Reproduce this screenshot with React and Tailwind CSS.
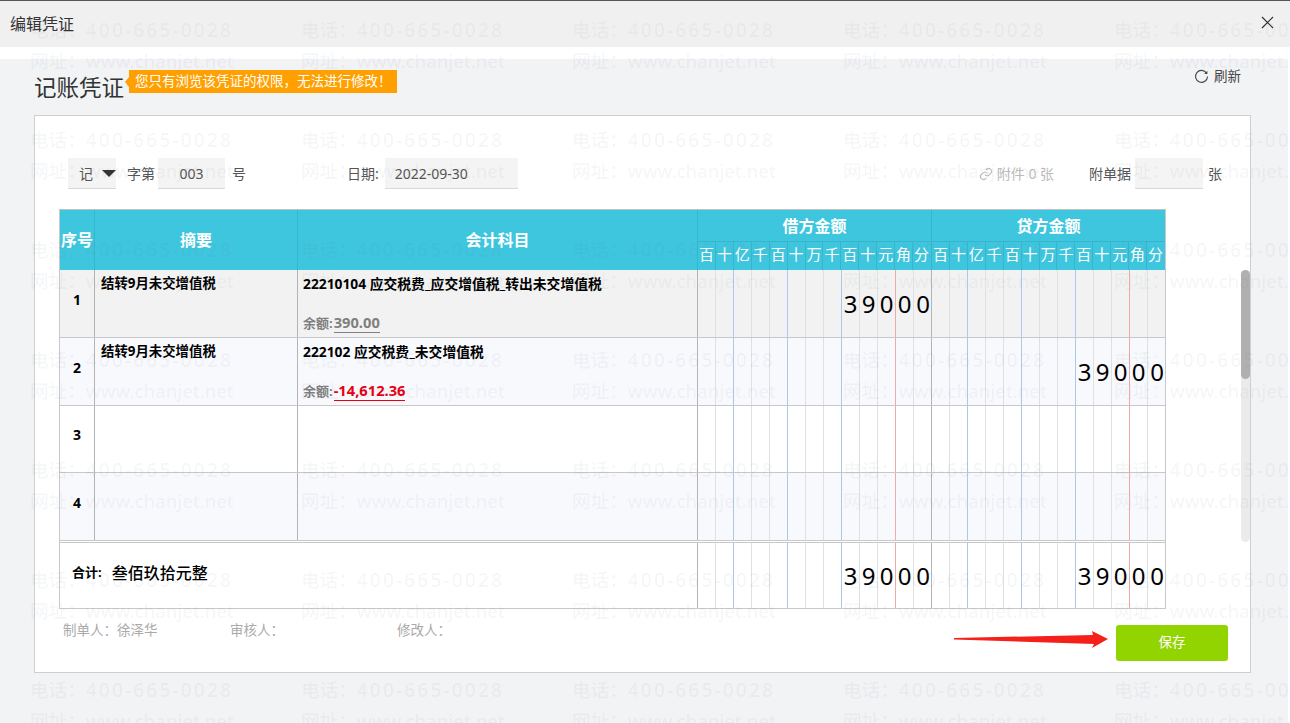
import React from "react";

const units = ["百","十","亿","千","百","十","万","千","百","十","元","角","分"];
const FONT = "font-['Noto_Sans','Noto_Sans_CJK_SC',sans-serif]";

function lineClass(i) {
  if (i === 12) return "";
  if (i === 10) return "border-r border-r-[#eeaaaa]";
  if (i === 1 || i === 4 || i === 7) return "border-r border-r-[#a9c8ea]";
  return "border-r border-r-[#e0e0e0]";
}

function HeaderUnits() {
  return (
    <div className="flex h-[28px]">
      {units.map((u, i) => (
        <div key={i} className={"w-[18px] h-full flex items-center justify-center pb-[3px] text-[15px] text-white border-r " + (i === 12 ? "border-r-transparent" : "border-r-[#38b5cc]")}>
          {u}
        </div>
      ))}
    </div>
  );
}

function Amount({ digits = "", last }) {
  const cells = Array(13).fill("");
  if (digits) {
    const arr = digits.split("");
    arr.forEach((d, i) => { cells[13 - arr.length + i] = d; });
  }
  return (
    <div className={"flex w-[234px] h-full shrink-0 " + (last ? "" : "border-r border-r-[#b4b4b4]")}>
      {cells.map((c, i) => (
        <div key={i} className={"w-[18px] shrink-0 h-full flex items-center justify-center text-[24px] text-black " + lineClass(i)}>
          {c}
        </div>
      ))}
    </div>
  );
}

function Row({ no, bg, h = "h-[68px]", summary, code, balance, red, debit, credit }) {
  return (
    <div className={"flex border-b border-b-[#c8c8c8] " + h + " " + bg}>
      <div className="w-[35px] shrink-0 border-r border-r-[#b4b4b4] flex items-center justify-center pb-[9px] text-[14px] font-bold text-black">{no}</div>
      <div className="w-[203px] shrink-0 border-r border-r-[#b4b4b4] pl-[6px] pt-[3px] text-[13.4px] leading-[20px] font-bold text-black">{summary}</div>
      <div className="w-[400px] shrink-0 border-r border-r-[#b4b4b4] pl-[5px] pt-[3px] flex flex-col">
        {code && <div className="text-[13.8px] leading-[21px] font-bold text-black">{code}</div>}
        {code && (
          <div className="mt-[18px] text-[13px] leading-[20px] text-[#7f7f7f] font-bold">
            余额:<span className={"inline-block ml-[1px] text-[14.7px] leading-[20px] border-b " + (red ? "text-[#e60012] border-b-[#e60012]" : "text-[#7f7f7f] border-b-[#7f7f7f]")}>{balance}</span>
          </div>
        )}
      </div>
      <Amount digits={debit} />
      <Amount digits={credit} last />
    </div>
  );
}

function Field({ w, children }) {
  return (
    <div className={"h-[31px] bg-[#f4f4f4] border-b border-b-[#d8d8d8] flex items-center text-[14px] text-[#555] " + w}>
      {children}
    </div>
  );
}

function Watermark() {
  const ys = [15, 125, 235, 345, 455, 565, 675];
  const xs = [30, 301, 572, 843, 1114];
  return (
    <div className="absolute inset-0 pointer-events-none overflow-hidden">
      {ys.map((y) =>
        xs.map((x) => (
          <div key={x + "-" + y} className="absolute whitespace-nowrap text-[#6b7280]/[0.07] font-medium leading-[30px]" style={{ left: x, top: y }}>
            <div><span className="text-[18.6px]">电话：</span><span className="text-[19px] tracking-[2.2px]">400-665-0028</span></div>
            <div><span className="text-[18.6px]">网址：</span><span className="text-[18.4px]">www.chanjet.net</span></div>
          </div>
        ))
      )}
    </div>
  );
}

export default function App() {
  return (
    <div className={"relative w-[1290px] h-[723px] overflow-hidden bg-white flex flex-col " + FONT}>
      {/* title bar */}
      <div className="h-[47px] shrink-0 border-t border-t-[#555] bg-[#f0f0f0] flex items-center justify-between pl-[10px] pr-[16px]">
        <span className="text-[16px] text-[#333]">编辑凭证</span>
        <svg width="13" height="13" viewBox="0 0 13 13" className="mb-[3px]">
          <path d="M1 1L12 12M12 1L1 12" stroke="#333" strokeWidth="1.2" fill="none" />
        </svg>
      </div>
      <div className="h-[12px] shrink-0 bg-white" />

      {/* body */}
      <div className="flex-1 mr-[2px] bg-[#f2f3f5] pl-[34px] pr-[37px] flex flex-col">
        <div className="h-[56px] shrink-0 flex items-start">
          <span className="mt-[13px] text-[22.5px] leading-[32px] text-[#333]">记账凭证</span>
          <div className="relative ml-[5px] mt-[11px] h-[23px] w-[268px] bg-[#ffa000] text-white text-[13.5px] leading-[22px] pl-[6px]">
            <span className="absolute -left-[4px] top-[7px] w-0 h-0 border-y-[5px] border-y-transparent border-r-[4px] border-r-[#ffa000]" />
            您只有浏览该凭证的权限，无法进行修改！
          </div>
          <div className="ml-auto mt-[8px] mr-[10px] flex items-center gap-[5px] text-[13.5px] leading-[18px] text-[#444]">
            <svg width="15" height="15" viewBox="0 0 15 15" fill="none">
              <path d="M12.6 4.2A6 6 0 1 0 13.5 7.5" stroke="#444" strokeWidth="1.1" />
              <path d="M13.4 1.8V5H10.2" fill="#444" />
            </svg>
            刷新
          </div>
        </div>

        {/* card */}
        <div className="relative w-[1217px] h-[558px] bg-white border border-[#cfcfcf] pl-[24px] flex flex-col">
          {/* toolbar */}
          <div className="mt-[42px] h-[31px] shrink-0 flex items-center text-[14px] text-[#555] w-[1170px] pl-[9px]">
            <Field w="w-[48px] pl-[11px] gap-[9px]">
              记
              <span className="w-0 h-0 border-x-[7px] border-x-transparent border-t-[7px] border-t-[#333]" />
            </Field>
            <span className="ml-[11px] mr-[3px]">字第</span>
            <Field w="w-[67px] justify-center">003</Field>
            <span className="ml-[7px]">号</span>
            <span className="ml-[101px] mr-[6px]">日期:</span>
            <Field w="w-[133px] pl-[10px]">2022-09-30</Field>
            <span className="ml-[461px] flex items-center gap-[4px] text-[#bdbdbd]">
              <svg width="14" height="14" viewBox="0 0 24 24" fill="none" stroke="#bdbdbd" strokeWidth="2">
                <path d="M10 13a5 5 0 0 0 7.5.5l3-3a5 5 0 0 0-7-7l-1.700 1.700" />
                <path d="M14 11a5 5 0 0 0-7.500-.5l-3 3a5 5 0 0 0 7 7l1.700-1.700" />
              </svg>
              附件 0 张
            </span>
            <span className="ml-[35px] mr-[4px]">附单据</span>
            <Field w="w-[68px]" />
            <span className="ml-[5px]">张</span>
          </div>

          {/* table */}
          <div className="mt-[20px] w-[1107px] h-[400px] border border-[#c8c8c8] border-t-[#c0c0c0] flex flex-col">
            <div className="flex h-[60px] shrink-0 bg-[#3dc6de] text-white font-bold">
              <div className="w-[35px] shrink-0 border-r border-r-[#38b5cc] flex items-center justify-center text-[16px]">序号</div>
              <div className="w-[203px] shrink-0 border-r border-r-[#38b5cc] flex items-center justify-center text-[16px]">摘要</div>
              <div className="w-[400px] shrink-0 border-r border-r-[#38b5cc] flex items-center justify-center text-[16px]">会计科目</div>
              <div className="w-[234px] shrink-0 border-r border-r-[#38b5cc] flex flex-col">
                <div className="h-[32px] pt-[1px] border-b border-b-[#38b5cc] flex items-center justify-center text-[16px]">借方金额</div>
                <div className="font-normal"><HeaderUnits /></div>
              </div>
              <div className="w-[233px] shrink-0 flex flex-col">
                <div className="h-[32px] pt-[1px] border-b border-b-[#38b5cc] flex items-center justify-center text-[16px]">贷方金额</div>
                <div className="font-normal"><HeaderUnits /></div>
              </div>
            </div>
            <Row no="1" bg="bg-[#f2f2f2]" summary="结转9月未交增值税" code="22210104 应交税费_应交增值税_转出未交增值税" balance="390.00" debit="39000" />
            <Row no="2" bg="bg-[#f8f9fd]" summary="结转9月未交增值税" code="222102 应交税费_未交增值税" balance="-14,612.36" red credit="39000" />
            <Row no="3" h="h-[67px]" bg="bg-white" />
            <Row no="4" bg="bg-[#f8f9fd]" />
            <div className="flex flex-1 border-t border-t-[#c8c8c8] mt-[1px] min-h-0">
              <div className="w-[638px] shrink-0 flex items-center pl-[12px] pb-[5px] text-black border-r border-r-[#b4b4b4]">
                <span className="text-[13px] font-bold mr-[10px]">合计:</span>
                <span className="text-[16px] font-medium">叁佰玖拾元整</span>
              </div>
              <Amount digits="39000" />
              <Amount digits="39000" last />
            </div>
          </div>

          {/* footer */}
          <div className="flex mt-[12px] pl-[4px] text-[13.5px] leading-[18px] text-[#aaaaaa]">
            <span className="w-[167px]">制单人：徐泽华</span>
            <span className="w-[167px]">审核人：</span>
            <span>修改人：</span>
          </div>

          <button className="absolute left-[1081px] top-[509px] w-[112px] h-[36px] rounded-[3px] bg-[#92d400] text-white text-[13.5px] pb-[2px]">保存</button>

          {/* arrow annotation */}
          <svg className="absolute left-[919px] top-[514px]" width="156" height="20" viewBox="0 0 156 20">
            <path d="M0 8L139 5L138 1L154 9L138 18L140 14L0 9.500Z" fill="#f5201a" />
          </svg>

          {/* scrollbar */}
          <div className="absolute left-[1206px] top-[154px] w-[9px] h-[272px] rounded-[5px] bg-[#ebebeb]">
            <div className="w-[9px] h-[109px] rounded-[5px] bg-[#b0b0b0]" />
          </div>
        </div>
      </div>
      <Watermark />
    </div>
  );
}
